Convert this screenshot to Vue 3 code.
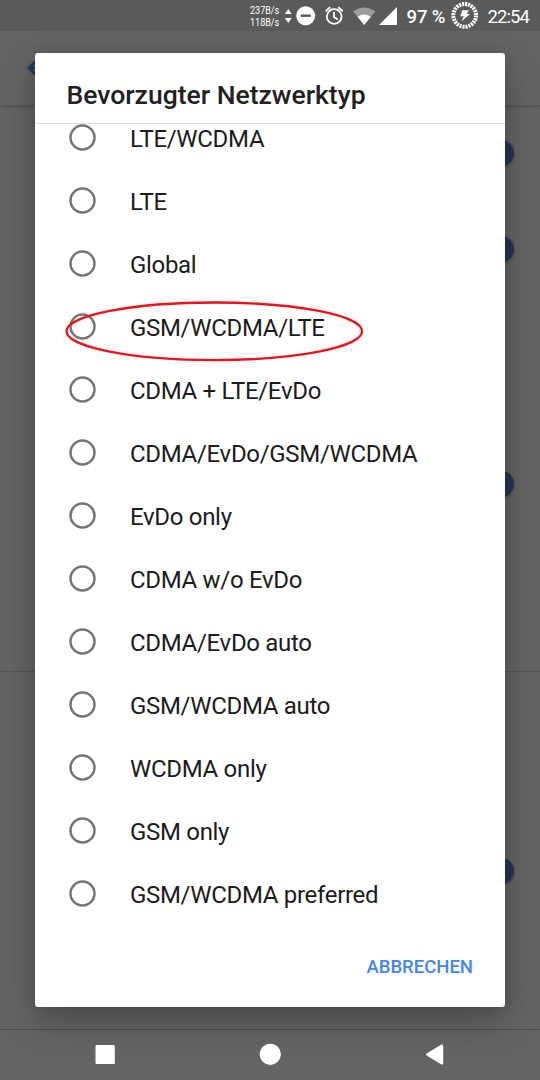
<template>
  <div class="screen">
    <header class="status-bar">
      <div class="net-speed">
        <span>237B/s</span>
        <span>118B/s</span>
      </div>
      <svg class="status-icons" width="160" height="31" viewBox="280 0 160 31">
        <path d="M288.3 9l3.4 5h-6.8zM288.3 23l3.4-5h-6.8z" fill="#fff" />
        <circle cx="305.7" cy="15.7" r="9.5" fill="#fff" />
        <rect x="300.7" y="14.5" width="10" height="2.4" fill="#555" />
        <g fill="none" stroke="#fff" stroke-width="1.8">
          <circle cx="334.2" cy="16.5" r="7.4" />
          <path d="M325.7 11.2l4.5-3.9M342.7 11.2l-4.5-3.9M334 12v5l3.8 2.5" />
        </g>
        <path d="M353 11.2Q364 3.6 375.4 11.2L364.2 25z" fill="#9b9b9b" />
        <path d="M357.6 16.8Q364.2 12.2 370.8 16.8L364.2 25z" fill="#fff" />
        <path d="M379 25h18V7z" fill="#fff" />
      </svg>
      <span class="percent">97 %</span>
      <svg class="battery" width="28" height="28" viewBox="0 0 28 28">
        <circle cx="13.7" cy="14.4" r="11.4" fill="none" stroke="#fff" stroke-width="4" stroke-dasharray="2.08 0.904" />
        <path d="M11.3 9.3h6.6l-2 3.6h3.2l-8.4 7.4 2.1-5H9.2z" fill="#fff" />
      </svg>
      <span class="clock">22:54</span>
    </header>

    <div class="app-bar">
      <svg width="26" height="26" viewBox="0 0 26 26" fill="none" stroke="#263b60" stroke-width="3">
        <path d="M13 3L3 13l10 10M3 13h21" />
      </svg>
    </div>

    <main class="settings">
      <div v-for="(row, i) in settings" :key="i" :class="['setting', row]">
        <i v-if="row !== 'blank'" class="thumb"></i>
      </div>
    </main>

    <footer class="nav-bar">
      <svg width="540" height="50" viewBox="0 0 540 50" fill="#fff">
        <rect x="95.5" y="15" width="19.3" height="19" rx="1" />
        <circle cx="270.3" cy="24.3" r="10.6" />
        <path d="M427 23.3l14-8.5q2.2-1 2.2 1.2v17q0 2.2-2.2 1.2l-14-8.5q-2-1.2 0-2.4z" />
      </svg>
    </footer>

    <div class="overlay">
      <section class="dialog" role="dialog">
        <h1 class="title">Bevorzugter Netzwerktyp</h1>
        <div class="list-wrap">
          <ul class="list">
            <li v-for="type in networkTypes" :key="type" class="option" @click="selected = type">
              <svg class="radio" width="27" height="27" viewBox="0 0 27 27">
                <circle cx="13.5" cy="13.5" r="12" fill="none" stroke="#757575" stroke-width="2.5" />
                <circle v-if="selected === type" cx="13.5" cy="13.5" r="6.5" fill="#4285f4" />
              </svg>
              <span class="label">{{ type }}</span>
              <svg v-if="type === marked" class="mark" width="300" height="62" viewBox="0 0 300 62">
                <ellipse cx="150.3" cy="31.3" rx="147.8" ry="28.8" fill="none" stroke="#ec111b" stroke-width="2.3" />
              </svg>
            </li>
          </ul>
        </div>
        <div class="actions">
          <button class="cancel">ABBRECHEN</button>
        </div>
      </section>
    </div>
  </div>
</template>

<script setup>
import { ref } from 'vue'

const selected = ref(null)
const marked = 'GSM/WCDMA/LTE'

const settings = ['switch', 'switch', 'blank', 'middle', 'last']

const networkTypes = [
  'LTE/WCDMA',
  'LTE',
  'Global',
  'GSM/WCDMA/LTE',
  'CDMA + LTE/EvDo',
  'CDMA/EvDo/GSM/WCDMA',
  'EvDo only',
  'CDMA w/o EvDo',
  'CDMA/EvDo auto',
  'GSM/WCDMA auto',
  'WCDMA only',
  'GSM only',
  'GSM/WCDMA preferred',
]
</script>

<style>
body {
  margin: 0;
  overflow: hidden;
}
</style>

<style scoped>
.screen {
  position: relative;
  display: flex;
  flex-direction: column;
  width: 540px;
  height: 1080px;
  overflow: hidden;
  background: #646464;
  font-family: Roboto, sans-serif;
}

.status-bar {
  position: relative;
  z-index: 2;
  display: flex;
  height: 31px;
  color: #fff;
  background: #5a5a5a;
}

.net-speed {
  display: flex;
  flex-direction: column;
  width: 30px;
  margin-left: 250px;
  padding-top: 5px;
  font-size: 11px;
  line-height: 12px;
}
.net-speed span {
  transform: scaleX(0.82);
  transform-origin: left;
}

.status-icons {
  flex: none;
  margin-right: -33.5px;
}

.percent,
.clock {
  font-size: 18.5px;
  line-height: 34px;
  white-space: nowrap;
}
.percent {
  width: 44px;
  font-weight: 500;
  letter-spacing: -0.1px;
}
.battery {
  flex: none;
  margin-top: 1px;
}
.clock {
  margin-left: 9px;
  letter-spacing: -0.9px;
}

.app-bar {
  height: 75px;
  box-sizing: border-box;
  padding: 24px 0 0 25.5px;
  border-bottom: 1px solid #565656;
  box-shadow: 0 1px 3px rgba(0, 0, 0, 0.2);
}

.settings {
  flex: 1;
  margin-top: -1px;
}
.setting {
  display: flex;
  align-items: center;
  justify-content: flex-end;
  box-sizing: border-box;
  height: 96px;
  padding-right: 26px;
}
.setting.blank {
  height: 139px;
}
.setting.middle {
  height: 236px;
  padding-bottom: 140px;
  border-bottom: 1px solid #555;
}
.setting.last {
  height: 357px;
  padding-top: 41px;
}
.thumb {
  width: 26px;
  height: 26px;
  border-radius: 50%;
  background: #263552;
  box-shadow: 0 1px 3px rgba(0, 0, 0, 0.3);
}

.nav-bar {
  position: relative;
  height: 50px;
  border-top: 1px solid #4d4d4d;
}
.nav-bar svg {
  position: relative;
  z-index: 2;
  display: block;
}

.overlay {
  position: absolute;
  inset: 0;
  z-index: 1;
  box-sizing: border-box;
  padding: 53px 35px 73px;
}

.dialog {
  display: flex;
  flex-direction: column;
  height: 954px;
  border-radius: 3px;
  background: #fff;
  box-shadow: 0 14px 36px rgba(0, 0, 0, 0.26), 0 0 12px rgba(0, 0, 0, 0.1);
}

.title {
  height: 70px;
  margin: 0;
  padding: 0 31.5px;
  border-bottom: 1px solid #dcdcdc;
  color: #212121;
  font-size: 26.5px;
  font-weight: 500;
  line-height: 84px;
  white-space: nowrap;
}

.list-wrap {
  height: 802px;
  overflow: hidden;
}
.list {
  margin: -18px 0 0;
  padding: 0;
  list-style: none;
}
.option {
  position: relative;
  display: flex;
  align-items: center;
  height: 63px;
  padding-left: 34px;
  color: #1c1c1c;
  font-size: 24px;
  letter-spacing: -0.31px;
}
.radio {
  flex: none;
}
.label {
  margin-left: 34px;
  padding-top: 2px;
}
.mark {
  position: absolute;
  left: 29px;
  top: 5px;
}

.actions {
  display: flex;
  justify-content: flex-end;
  padding: 19px 32px 0;
}
.cancel {
  padding: 0;
  border: 0;
  background: none;
  color: #4285f4;
  font-family: inherit;
  font-size: 18.5px;
  font-weight: 500;
  line-height: 44px;
}
</style>
